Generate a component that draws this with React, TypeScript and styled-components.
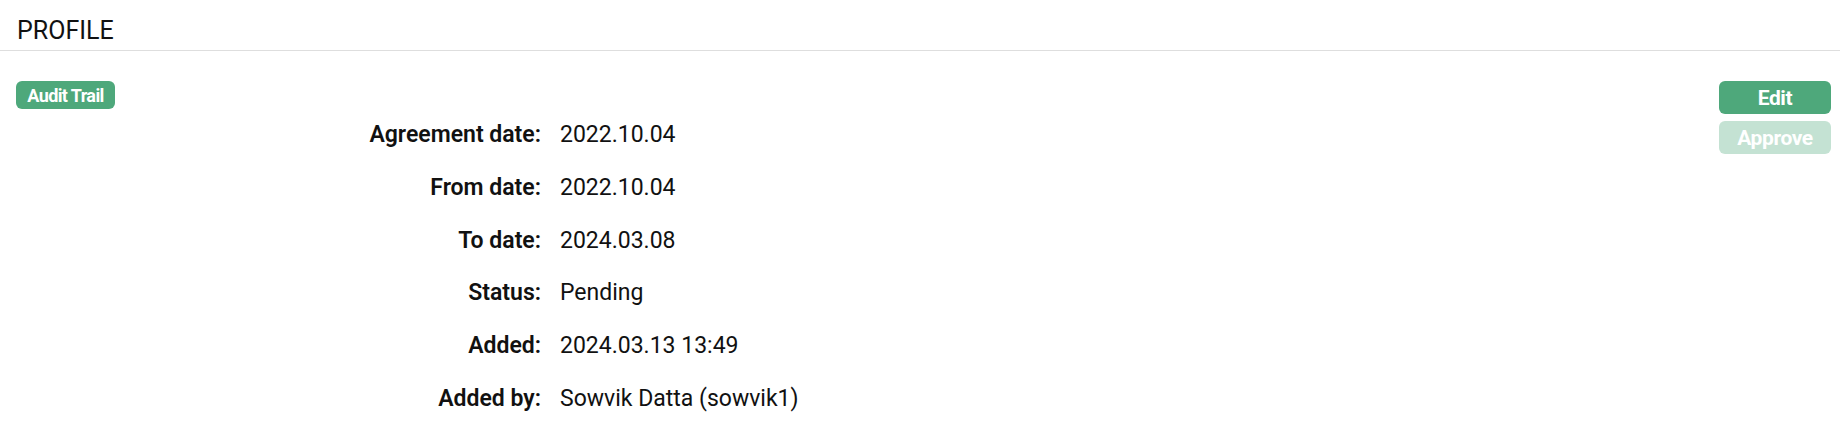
import * as React from 'react';
import styled, { createGlobalStyle } from 'styled-components';

const GlobalStyle = createGlobalStyle`
  html, body {
    margin: 0;
    padding: 0;
    background: #fff;
    font-family: Roboto, "Open Sans", Arial, sans-serif;
    color: #111;
  }
`;

const Page = styled.div`
  width: 1840px;
  min-height: 427px;
  box-sizing: border-box;
`;

const Header = styled.div`
  padding: 16px 17px 5px;
  font-size: 25px;
  line-height: 29px;
  font-weight: 400;
  color: #111;
  border-bottom: 1px solid #dedede;
`;

const Body = styled.div`
  display: flex;
  justify-content: space-between;
  align-items: flex-start;
  padding: 30px 9px 0 16px;
`;

const Main = styled.div`
  display: flex;
  flex-direction: column;
  align-items: flex-start;
`;

const Actions = styled.div`
  display: flex;
  flex-direction: column;
  gap: 7px;
`;

const Button = styled.button<{ $size?: 'sm' | 'md'; $disabled?: boolean }>`
  border: none;
  margin: 0;
  padding: 0;
  border-radius: 6px;
  background: #4ea87b;
  color: #fff;
  font-family: Roboto, "Open Sans", Arial, sans-serif;
  font-weight: 700;
  cursor: pointer;
  opacity: ${(p) => (p.$disabled ? 0.33 : 1)};
  height: ${(p) => (p.$size === 'sm' ? '28px' : '33px')};
  width: ${(p) => (p.$size === 'sm' ? '99px' : '112px')};
  font-size: ${(p) => (p.$size === 'sm' ? '18px' : '21px')};
  letter-spacing: ${(p) => (p.$size === 'sm' ? '-0.6px' : '-0.4px')};
`;

const Details = styled.dl`
  display: grid;
  grid-template-columns: 525px auto;
  column-gap: 19px;
  margin: 0;
  font-size: 23px;
`;

const Label = styled.dt`
  text-align: right;
  font-weight: 600;
  line-height: 52.8px;
  color: #111;
`;

const Value = styled.dd`
  margin: 0;
  line-height: 52.8px;
  font-weight: 400;
  color: #111;
`;

const rows: [string, string][] = [
  ['Agreement date:', '2022.10.04'],
  ['From date:', '2022.10.04'],
  ['To date:', '2024.03.08'],
  ['Status:', 'Pending'],
  ['Added:', '2024.03.13 13:49'],
  ['Added by:', 'Sowvik Datta (sowvik1)'],
];

export default function App() {
  return (
    <Page>
      <GlobalStyle />
      <Header>PROFILE</Header>
      <Body>
        <Main>
          <Button $size="sm">Audit Trail</Button>
          <Details>
            {rows.map(([label, value]) => (
              <React.Fragment key={label}>
                <Label>{label}</Label>
                <Value>{value}</Value>
              </React.Fragment>
            ))}
          </Details>
        </Main>
        <Actions>
          <Button>Edit</Button>
          <Button $disabled>Approve</Button>
        </Actions>
      </Body>
    </Page>
  );
}
